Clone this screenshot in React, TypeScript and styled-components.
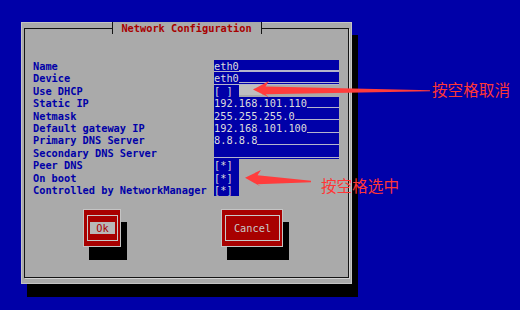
import * as React from 'react'
import styled, { createGlobalStyle } from 'styled-components'

const GlobalStyle = createGlobalStyle`
    html, body {
        margin: 0;
        padding: 0;
        background: #0000a8;
    }
    body {
        width: 520px;
        height: 310px;
        overflow: hidden;
        font-family: "DejaVu Sans Mono", "Liberation Mono", monospace;
        font-size: 10.3px;
    }
`

const Screen = styled.div`
    position: relative;
    width: 520px;
    height: 310px;
    box-sizing: border-box;
    padding: 22px 0 0 21px;
`

const Dialog = styled.div`
    width: 331px;
    height: 262px;
    box-sizing: border-box;
    background: #aaaaaa;
    border: 1px solid #c4c4c4;
    padding: 5px 2px;
    box-shadow: 6px 13px 0 #000;
`

const Frame = styled.div`
    position: relative;
    height: 100%;
    box-sizing: border-box;
    border: 1px solid #141414;
    box-shadow: 1px 1px 0 #d2d2d2;
    padding: 31px 0 0 8px;
`

const Title = styled.div`
    position: absolute;
    top: -7px;
    left: 50%;
    transform: translateX(-50%);
    width: 150px;
    height: 12px;
    box-sizing: border-box;
    background: #aaaaaa;
    border-left: 1px solid #141414;
    border-right: 1px solid #141414;
    color: #a80000;
    font-weight: bold;
    line-height: 12px;
    text-align: center;
    white-space: pre;
`

const Form = styled.div`
    display: grid;
    grid-template-columns: 181px 125px;
    grid-auto-rows: 12.4px;
    line-height: 12.4px;
`

const Label = styled.div`
    color: #0000a8;
    font-weight: bold;
    white-space: pre;
`

const TextField = styled.div<{ $separated?: boolean }>`
    display: flex;
    background: #0000a8;
    color: #dcdcdc;
    white-space: pre;
    box-shadow: ${p => (p.$separated ? 'inset 0 -1px 0 #b4b4cc' : 'none')};
`

const Fill = styled.span`
    flex: 1;
    align-self: flex-end;
    height: 0;
    margin-bottom: 1.5px;
    border-bottom: 1px solid #b4b4cc;
`

const CheckCell = styled.div`
    display: flex;
    align-items: flex-start;
`

const Check = styled.div`
    width: 24.8px;
    height: 100%;
    background: #0000a8;
    color: #dcdcdc;
    white-space: pre;
`

const Hint = styled.div`
    width: 23px;
    height: 10px;
    margin-top: 0.5px;
    background: #bebebe;
`

const ButtonRow = styled.div`
    display: flex;
    gap: 100px;
    padding-left: 50px;
    margin-top: 12.6px;
`

const Button = styled.div<{ $width: number }>`
    width: ${p => p.$width}px;
    height: 38px;
    box-sizing: border-box;
    background: #a80000;
    border: 1px solid #c4c4c4;
    padding: 5px 2px 5px 3px;
    box-shadow: 6px 13px 0 #000;
`

const ButtonFace = styled.div`
    height: 100%;
    box-sizing: border-box;
    border: 1px solid #c8c8c8;
    display: flex;
    align-items: center;
    justify-content: center;
    color: #c8c8c8;
    line-height: 12px;
`

const Focused = styled.span`
    background: #b8b8b8;
    color: #a80000;
    padding: 0 6.2px;
`

const Marks = styled.svg`
    position: absolute;
    left: 0;
    top: 0;
    pointer-events: none;
`

const Note = styled.div<{ $x: number; $y: number }>`
    position: absolute;
    left: ${p => p.$x}px;
    top: ${p => p.$y}px;
    color: #ff3636;
    font-family: "Noto Sans CJK SC", sans-serif;
    font-size: 15.6px;
    line-height: 16px;
    white-space: nowrap;
`

type Row =
    | { label: string; kind: 'text'; value: string; separated?: boolean }
    | { label: string; kind: 'check'; checked: boolean; hint?: boolean }

const rows: Row[] = [
    { label: 'Name', kind: 'text', value: 'eth0', separated: true },
    { label: 'Device', kind: 'text', value: 'eth0', separated: true },
    { label: 'Use DHCP', kind: 'check', checked: false, hint: true },
    { label: 'Static IP', kind: 'text', value: '192.168.101.110' },
    { label: 'Netmask', kind: 'text', value: '255.255.255.0' },
    { label: 'Default gateway IP', kind: 'text', value: '192.168.101.100' },
    { label: 'Primary DNS Server', kind: 'text', value: '8.8.8.8' },
    { label: 'Secondary DNS Server', kind: 'text', value: '' },
    { label: 'Peer DNS', kind: 'check', checked: true },
    { label: 'On boot', kind: 'check', checked: true },
    { label: 'Controlled by NetworkManager', kind: 'check', checked: true },
]

const App: React.FunctionComponent = () => (
    <Screen>
        <GlobalStyle />
        <Dialog>
            <Frame>
                <Title>Network Configuration</Title>
                <Form>
                    {rows.map(row => (
                        <React.Fragment key={row.label}>
                            <Label>{row.label}</Label>
                            {row.kind === 'text' ? (
                                <TextField $separated={row.separated}>
                                    {row.value}
                                    <Fill />
                                </TextField>
                            ) : (
                                <CheckCell>
                                    <Check>{row.checked ? '[*]' : '[ ]'}</Check>
                                    {row.hint && <Hint />}
                                </CheckCell>
                            )}
                        </React.Fragment>
                    ))}
                </Form>
                <ButtonRow>
                    <Button $width={38}>
                        <ButtonFace>
                            <Focused>Ok</Focused>
                        </ButtonFace>
                    </Button>
                    <Button $width={62}>
                        <ButtonFace>Cancel</ButtonFace>
                    </Button>
                </ButtonRow>
            </Frame>
        </Dialog>

        <Marks width="520" height="310" viewBox="0 0 520 310">
            <polygon
                fill="#ff3c3c"
                points="253,89.4 269,81 265.5,86.4 430,90.2 430,91.2 265.5,94.2 269,97.4"
            />
            <polygon
                fill="#ff3c3c"
                points="245,177.7 261,170 257.5,175.2 311,180.8 311,182.2 257.5,184.2 261,186.8"
            />
        </Marks>
        <Note $x={432} $y={81}>按空格取消</Note>
        <Note $x={321} $y={176.5}>按空格选中</Note>
    </Screen>
)

export default App
